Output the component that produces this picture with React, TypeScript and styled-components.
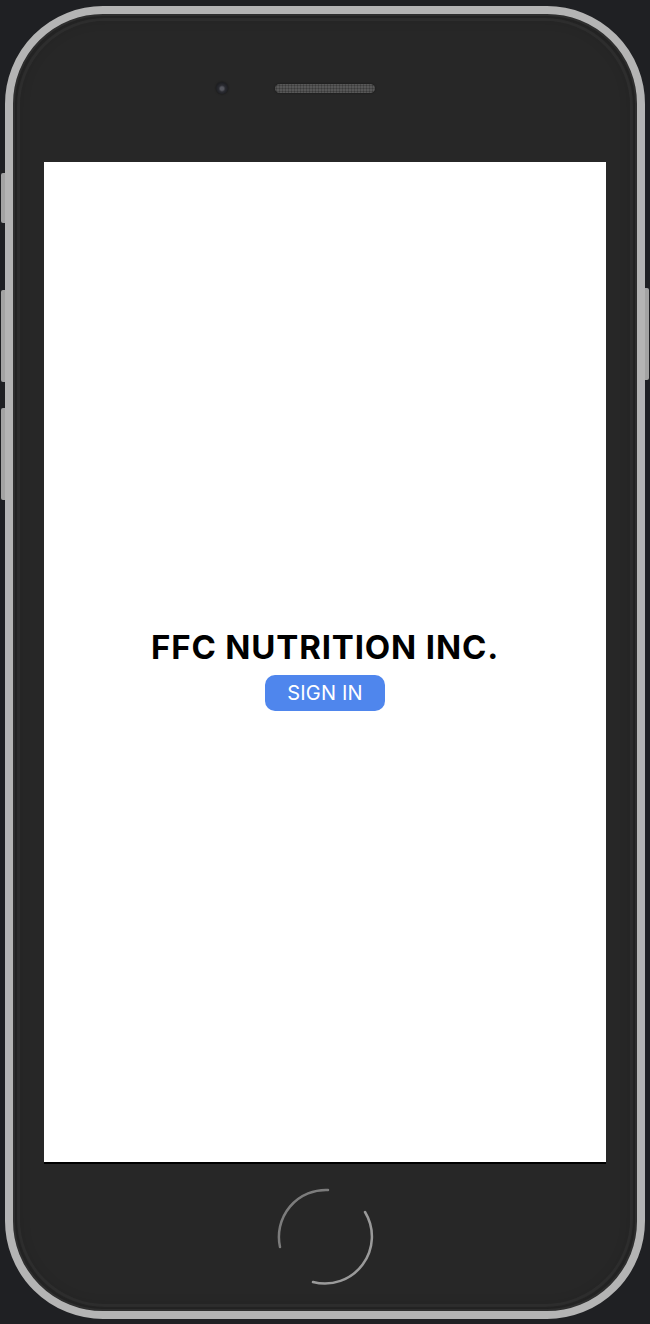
import React from "react";
import styled, { createGlobalStyle } from "styled-components";

const Global = createGlobalStyle`
  html, body { margin: 0; padding: 0; background: #1f2023; }
  body { font-family: Inter, "Liberation Sans", sans-serif; }
  #root { min-height: 1324px; }
`;

const Stage = styled.div`
  width: 650px;
  height: 1324px;
  padding: 6px 5px 5px;
  box-sizing: border-box;
  background: #1f2023;
`;

const Phone = styled.div`
  position: relative;
  width: 640px;
  height: 1313px;
  box-sizing: border-box;
  border: 8px solid #b4b4b4;
  border-radius: 98px;
  background: #272727;
  box-shadow: inset 0 0 0 2px #2e2e2e, inset 0 0 16px rgba(0, 0, 0, 0.3);
  display: flex;
  flex-direction: column;
  padding: 0 31px;

  &::before {
    content: "";
    position: absolute;
    inset: 4px;
    border-radius: 88px;
    border: 3px solid rgba(255, 255, 255, 0.045);
    pointer-events: none;
  }
`;

const SideButton = styled.div<{ $side: "left" | "right"; $top: number; $h: number }>`
  position: absolute;
  ${(p) => (p.$side === "left" ? "left: -12px;" : "right: -12px;")}
  top: ${(p) => p.$top}px;
  width: 4px;
  height: ${(p) => p.$h}px;
  background: #a3a3a3;
  border-radius: ${(p) => (p.$side === "left" ? "2px 0 0 2px" : "0 2px 2px 0")};
`;

const TopBezel = styled.div`
  height: 148px;
  display: grid;
  grid-template-columns: 1fr auto 1fr;
  align-items: center;
  box-sizing: border-box;
`;

const Camera = styled.div`
  justify-self: end;
  margin-right: 47px;
  width: 12px;
  height: 12px;
  border-radius: 50%;
  background: radial-gradient(circle at 50% 55%, #55565e 0 18%, #2a2b31 38%, #1c1d21 70%, #2c2d32 100%);
  box-shadow: 0 0 2px rgba(0, 0, 0, 0.6);
`;

const Speaker = styled.div`
  width: 100px;
  height: 9px;
  border-radius: 5px;
  background-color: #575757;
  background-image: radial-gradient(circle, #3a3a3a 0.8px, transparent 1.2px);
  background-size: 3px 3px;
  box-shadow: 0 0 2px rgba(0, 0, 0, 0.5);
`;

const Screen = styled.main`
  height: 1000px;
  background: #ffffff;
  box-shadow: 0 2px 0 #000;
  display: flex;
  flex-direction: column;
  align-items: center;
  justify-content: center;
  padding-top: 14px;
  box-sizing: border-box;
`;

const Title = styled.h1`
  margin: 0;
  font-family: Inter, "Liberation Sans", sans-serif;
  font-weight: 700;
  font-size: 33px;
  line-height: 39px;
  color: #000;
  letter-spacing: 0.85px;
`;

const SignIn = styled.button`
  margin-top: 8px;
  width: 120px;
  height: 36px;
  border: none;
  border-radius: 10px;
  background: #4f86ed;
  color: #fff;
  font-family: Inter, "Liberation Sans", sans-serif;
  font-size: 20px;
  font-weight: 400;
  letter-spacing: 0.2px;
  cursor: pointer;
  padding: 0;
`;

const BottomBezel = styled.div`
  flex: 1;
  display: flex;
  align-items: center;
  justify-content: center;
`;

const HomeButton = () => (
  <svg width="100" height="100" viewBox="0 0 100 100">
    <path d="M 53 3 A 47 47 0 0 0 5 60" fill="none" stroke="#8c8c8c" strokeWidth="2.5" strokeLinecap="round" opacity="0.85" />
    <path d="M 90 25 A 47 47 0 0 1 38 95" fill="none" stroke="#9a9a9a" strokeWidth="2.5" strokeLinecap="round" />
  </svg>
);

export default function App() {
  return (
    <Stage>
      <Global />
      <Phone>
        <SideButton $side="left" $top={159} $h={50} />
        <SideButton $side="left" $top={276} $h={92} />
        <SideButton $side="left" $top={394} $h={92} />
        <SideButton $side="right" $top={274} $h={92} />
        <TopBezel>
          <Camera />
          <Speaker />
          <span />
        </TopBezel>
        <Screen>
          <Title>FFC NUTRITION INC.</Title>
          <SignIn type="button">SIGN IN</SignIn>
        </Screen>
        <BottomBezel>
          <HomeButton />
        </BottomBezel>
      </Phone>
    </Stage>
  );
}
